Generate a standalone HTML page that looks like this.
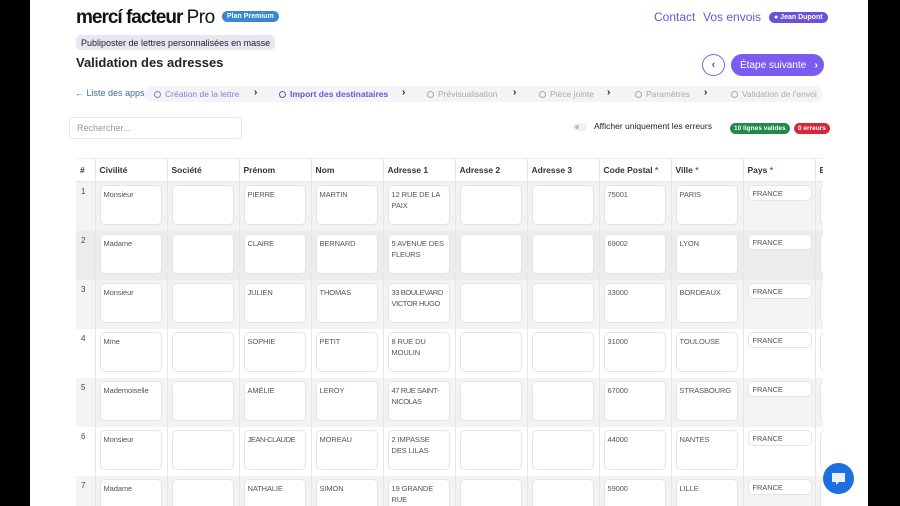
<!DOCTYPE html>
<html><head><meta charset="utf-8"><style>
*{box-sizing:border-box;margin:0;padding:0}
body{width:900px;height:506px;overflow:hidden;background:#000;font-family:"Liberation Sans",sans-serif;position:relative}
.page{position:absolute;left:30px;top:0;width:838px;height:506px;background:#fff;overflow:hidden}
.a{position:absolute;white-space:nowrap}
.logo{left:46px;top:7px;font-size:19px;font-weight:bold;letter-spacing:-1px;color:#111}
.pill{border-radius:8px;font-size:7px;font-weight:bold;color:#fff;padding:2px 5px}
.sub{left:46px;top:35px;background:#e8e6f3;border-radius:5px;font-size:9px;color:#222;padding:3px 5px;height:15px}
.h1{left:46px;top:55px;font-size:13px;font-weight:bold;color:#222}
.nav{font-size:12px;color:#6c52d9;top:10px}
.steps{left:114px;top:86px;width:679px;height:16px;background:#f4f4f6;border-radius:8px}
.st{font-size:8.5px;top:89px;color:#aaa}
.ch{font-size:10px;top:87px;color:#222;font-weight:bold}
.circ{display:inline-block;width:7px;height:7px;border:1px solid #aaa;border-radius:50%;margin-right:4px;vertical-align:-1px}
.tbl{position:absolute;left:46px;top:158px;width:747px;height:348px;overflow:hidden}
table{border-collapse:collapse;table-layout:fixed;width:819px}
td,th{border-right:1px solid #e6e6e6;vertical-align:top;text-align:left}
th{height:22px;font-size:8.5px;font-weight:bold;color:#333;padding:6px 4px;background:#fff;border-bottom:1px solid #e6e6e6;border-top:1px solid #eee}
tr{height:49px}
td{height:49px;padding:3px 4px 0 4px;font-size:7.5px;color:#555}
td.n{padding:5px 5px;font-size:8px;color:#444}
.in{width:62px;height:40px;background:#fff;border:1px solid #e4e4e4;border-radius:5px;padding:3px 3px;line-height:11px;overflow:hidden;letter-spacing:-0.1px}
.in.s{width:64px;height:16px;padding:2px 4px}
.r{color:#d33}
tr.g td{background:#f3f3f3}
tr.d td{background:#ececec}
tr.w td{background:#fff}
</style></head><body><div class="page">
<div class="a logo">mercí facteur <span style="font-weight:normal;letter-spacing:-0.5px">Pro</span></div>
<div class="a pill" style="left:192px;top:11px;background:#3a86d1">Plan Premium</div>
<div class="a nav" style="left:624px">Contact</div>
<div class="a nav" style="left:673px">Vos envois</div>
<div class="a pill" style="left:739px;top:12px;background:#6c52d9">● Jean Dupont</div>
<div class="a sub">Publiposter de lettres personnalisées en masse</div>
<div class="a h1">Validation des adresses</div>
<div class="a" style="left:672px;top:54px;width:23px;height:22px;border:1px solid #7a64d8;border-radius:50%;color:#6c52d9;font-size:11px;text-align:center;line-height:20px;font-weight:bold">‹</div>
<div class="a" style="left:701px;top:54px;width:93px;height:22px;background:#7c5cf0;border-radius:11px;color:#fff;font-size:10px;display:flex;align-items:center;padding-left:9px">Étape suivante &nbsp;&nbsp;<b>›</b></div>
<div class="a" style="left:45px;top:88px;font-size:9px;color:#3a6ea5">← Liste des apps</div>
<div class="a steps"></div>
<div class="a st" style="left:124px;color:#8a7ad6"><span class="circ" style="border-color:#8a7ad6"></span>Création de la lettre</div>
<div class="a ch" style="left:224px">›</div>
<div class="a st" style="left:249px;color:#6c52d9;font-weight:bold"><span class="circ" style="border-color:#6c52d9"></span>Import des destinataires</div>
<div class="a ch" style="left:372px">›</div>
<div class="a st" style="left:397px"><span class="circ"></span>Prévisualisation</div>
<div class="a ch" style="left:483px">›</div>
<div class="a st" style="left:509px"><span class="circ"></span>Pièce jointe</div>
<div class="a ch" style="left:577px">›</div>
<div class="a st" style="left:605px"><span class="circ"></span>Paramètres</div>
<div class="a ch" style="left:674px">›</div>
<div class="a st" style="left:701px"><span class="circ"></span>Validation de l'envoi</div>
<div class="a" style="left:39px;top:117px;width:173px;height:22px;border:1px solid #e6e6e6;border-radius:5px;font-size:9px;color:#999;padding:5px 7px">Rechercher...</div>
<div class="a" style="left:543px;top:123px;width:14px;height:8px;background:#f1f1f1;border-radius:4px"><div style="width:4px;height:4px;background:#bbb;border-radius:50%;margin:2px"></div></div>
<div class="a" style="left:564px;top:121px;font-size:8.5px;color:#222">Afficher uniquement les erreurs</div>
<div class="a pill" style="left:700px;top:123px;background:#1f8a4c;padding:2px 4px;font-size:6.5px">10 lignes valides</div>
<div class="a pill" style="left:764px;top:123px;background:#d6283a;padding:2px 4px;font-size:6.5px">0 erreurs</div>
<div class="tbl"><table>
<colgroup><col style="width:19px"><col span="10" style="width:72px"><col style="width:80px"></colgroup>
<tr style="height:22px"><th>#</th><th>Civilité</th><th>Société</th><th>Prénom</th><th>Nom</th><th>Adresse 1</th><th>Adresse 2</th><th>Adresse 3</th><th>Code Postal <span class="r">*</span></th><th>Ville <span class="r">*</span></th><th>Pays <span class="r">*</span></th><th>E</th></tr>
<tr class="g"><td class="n">1</td><td><div class="in">Monsieur</div></td><td><div class="in"></div></td><td><div class="in">PIERRE</div></td><td><div class="in">MARTIN</div></td><td><div class="in">12 RUE DE LA PAIX</div></td><td><div class="in"></div></td><td><div class="in"></div></td><td><div class="in">75001</div></td><td><div class="in">PARIS</div></td><td><div class="in s">FRANCE</div></td><td><div class="in"></div></td></tr>
<tr class="d"><td class="n">2</td><td><div class="in">Madame</div></td><td><div class="in"></div></td><td><div class="in">CLAIRE</div></td><td><div class="in">BERNARD</div></td><td><div class="in">5 AVENUE DES FLEURS</div></td><td><div class="in"></div></td><td><div class="in"></div></td><td><div class="in">69002</div></td><td><div class="in">LYON</div></td><td><div class="in s">FRANCE</div></td><td><div class="in"></div></td></tr>
<tr class="g"><td class="n">3</td><td><div class="in">Monsieur</div></td><td><div class="in"></div></td><td><div class="in">JULIEN</div></td><td><div class="in">THOMAS</div></td><td><div class="in" style="letter-spacing:-0.4px">33 BOULEVARD VICTOR HUGO</div></td><td><div class="in"></div></td><td><div class="in"></div></td><td><div class="in">33000</div></td><td><div class="in">BORDEAUX</div></td><td><div class="in s">FRANCE</div></td><td><div class="in"></div></td></tr>
<tr class="w"><td class="n">4</td><td><div class="in">Mme</div></td><td><div class="in"></div></td><td><div class="in">SOPHIE</div></td><td><div class="in">PETIT</div></td><td><div class="in">8 RUE DU MOULIN</div></td><td><div class="in"></div></td><td><div class="in"></div></td><td><div class="in">31000</div></td><td><div class="in">TOULOUSE</div></td><td><div class="in s">FRANCE</div></td><td><div class="in"></div></td></tr>
<tr class="g"><td class="n">5</td><td><div class="in">Mademoiselle</div></td><td><div class="in"></div></td><td><div class="in">AMÉLIE</div></td><td><div class="in">LEROY</div></td><td><div class="in" style="letter-spacing:-0.4px">47 RUE SAINT-NICOLAS</div></td><td><div class="in"></div></td><td><div class="in"></div></td><td><div class="in">67000</div></td><td><div class="in">STRASBOURG</div></td><td><div class="in s">FRANCE</div></td><td><div class="in"></div></td></tr>
<tr class="w"><td class="n">6</td><td><div class="in">Monsieur</div></td><td><div class="in"></div></td><td><div class="in" style="letter-spacing:-0.4px">JEAN-CLAUDE</div></td><td><div class="in">MOREAU</div></td><td><div class="in">2 IMPASSE DES LILAS</div></td><td><div class="in"></div></td><td><div class="in"></div></td><td><div class="in">44000</div></td><td><div class="in">NANTES</div></td><td><div class="in s">FRANCE</div></td><td><div class="in"></div></td></tr>
<tr class="g"><td class="n">7</td><td><div class="in">Madame</div></td><td><div class="in"></div></td><td><div class="in">NATHALIE</div></td><td><div class="in">SIMON</div></td><td><div class="in">19 GRANDE RUE</div></td><td><div class="in"></div></td><td><div class="in"></div></td><td><div class="in">59000</div></td><td><div class="in">LILLE</div></td><td><div class="in s">FRANCE</div></td><td><div class="in"></div></td></tr>
</table></div>
<div class="a" style="left:793px;top:463px;width:31px;height:31px;border-radius:50%;background:#1e6fe0">
<svg width="31" height="31" viewBox="0 0 31 31"><path d="M9 10h13v9h-6l-3 3v-3h-4z" fill="#e8eefc"/></svg></div>
</div></body></html>
